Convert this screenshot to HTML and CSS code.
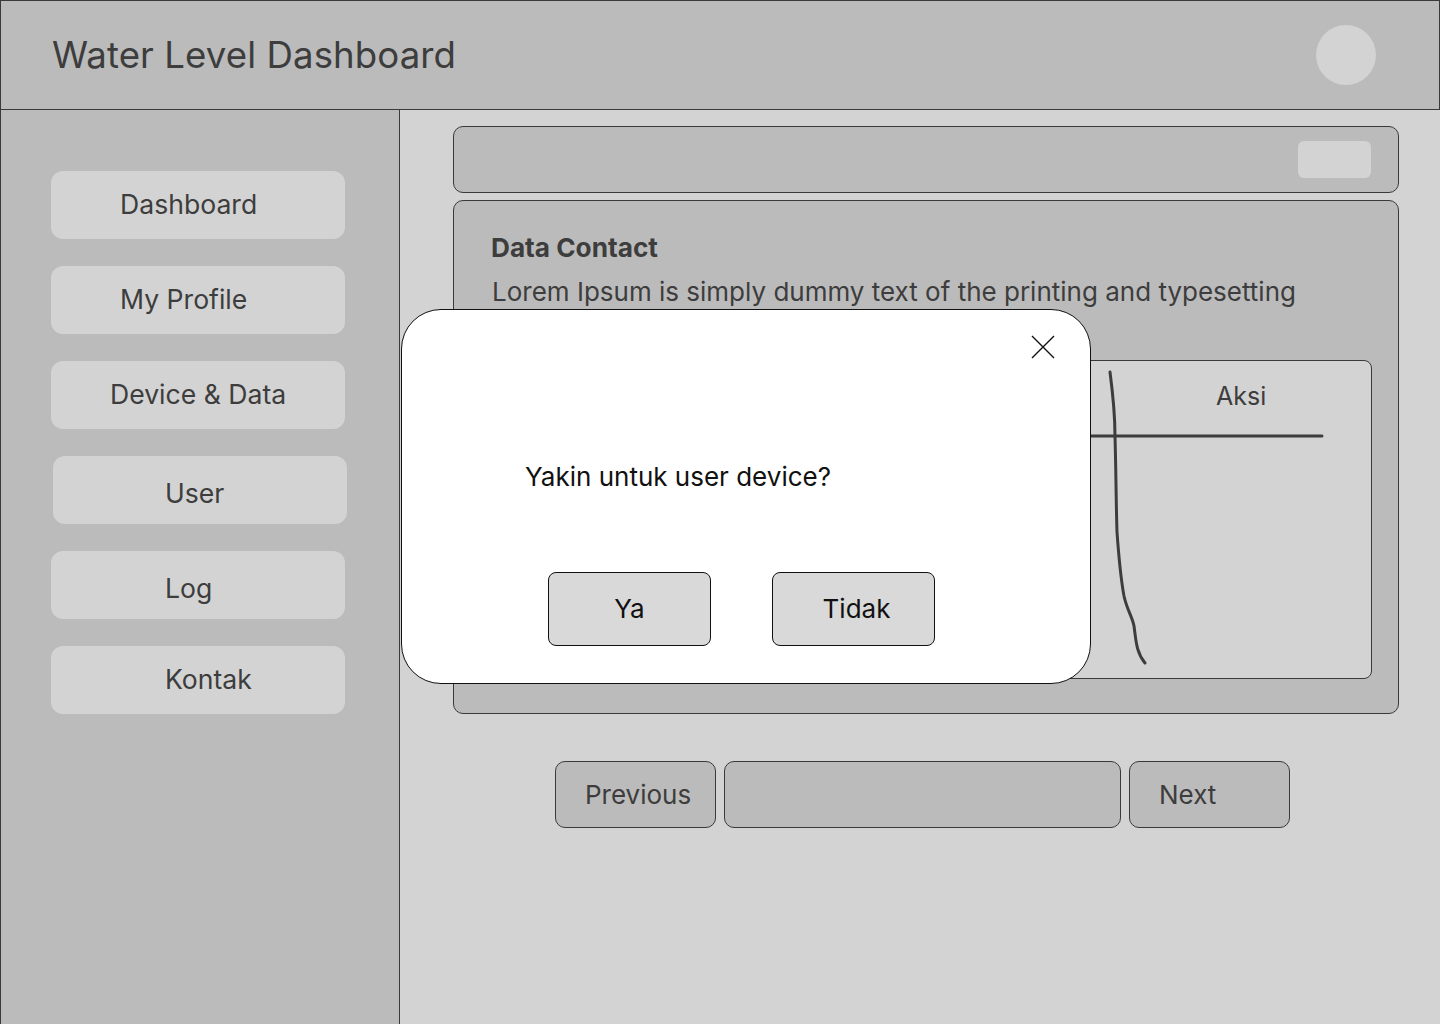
FILE: index.html
```html
<!DOCTYPE html>
<html lang="id">
<head>
<meta charset="utf-8">
<title>Water Level Dashboard</title>
<link rel="stylesheet" href="styles.css">
</head>
<body>
<header class="topbar">
  <h1 class="title">Water Level Dashboard</h1>
  <div class="avatar"></div>
</header>
<div class="layout">
  <nav class="sidebar">
    <a class="nav-btn pad-70">Dashboard</a>
    <a class="nav-btn pad-70">My Profile</a>
    <a class="nav-btn pad-60">Device &amp; Data</a>
    <a class="nav-btn pad-113 shift low">User</a>
    <a class="nav-btn pad-115 low">Log</a>
    <a class="nav-btn pad-115">Kontak</a>
  </nav>
  <main class="main">
    <div class="searchbar"><div class="search-btn"></div></div>
    <section class="card">
      <h2 class="card-title">Data Contact</h2>
      <p class="card-text">Lorem Ipsum is simply dummy text of the printing and typesetting</p>
      <div class="table">
        <div class="table-head"><span class="aksi">Aksi</span></div>
        <svg class="sketch" viewBox="0 0 881 319" width="881" height="319">
          <path d="M40 76 L831 76" stroke="#3d3d3d" stroke-width="3" fill="none" stroke-linecap="round"/>
          <path d="M619 12 C622 35 624 55 624 76 C625 110 625 140 626 172 C628 200 630 220 633 236 C636 250 641 256 643 266 C645 280 645 292 654 303" stroke="#3d3d3d" stroke-width="3" fill="none" stroke-linecap="round"/>
        </svg>
      </div>
    </section>
    <div class="pager">
      <button class="pg-btn pg-prev">Previous</button>
      <div class="pg-mid"></div>
      <button class="pg-btn pg-next">Next</button>
    </div>
  </main>
</div>
<div class="modal">
  <svg class="close" viewBox="0 0 24 24" width="24" height="24">
    <path d="M1 1 L23 23 M23 1 L1 23" stroke="#111" stroke-width="1.4" fill="none"/>
  </svg>
  <p class="modal-text">Yakin untuk user device?</p>
  <div class="modal-actions">
    <button class="m-btn">Ya</button>
    <button class="m-btn">Tidak</button>
  </div>
</div>
</body>
</html>
```
FILE: styles.css
```css
* { box-sizing: border-box; }
html, body { margin: 0; padding: 0; }
body {
  width: 1440px;
  height: 1024px;
  overflow: hidden;
  font-family: Inter, "Noto Sans", sans-serif;
  color: #3d3d3d;
  background: #d3d3d3;
  position: relative;
}
.topbar {
  height: 110px;
  background: #bbbbbb;
  border: 1px solid #3a3a3a;
  display: flex;
  align-items: center;
  justify-content: space-between;
  padding: 0 63px 0 51px;
}
.title {
  margin: 0;
  font-weight: 400;
  font-size: 36.6px;
  color: #3d3d3d;
  letter-spacing: 0.1px;
}
.avatar {
  width: 60px;
  height: 60px;
  border-radius: 50%;
  background: #d3d3d3;
}
.layout {
  display: flex;
  height: 914px;
}
.sidebar {
  width: 400px;
  flex: none;
  background: #bbbbbb;
  border-left: 1px solid #3a3a3a;
  border-right: 1px solid #3a3a3a;
  padding: 61px 0 0 50px;
  display: flex;
  flex-direction: column;
  gap: 27px;
}
.nav-btn {
  display: flex;
  align-items: center;
  width: 294px;
  height: 68px;
  border-radius: 12px;
  background: #d3d3d3;
  font-size: 26.6px;
  color: #3d3d3d;
  padding-bottom: 2px;
}
.pad-70 { padding-left: 69px; }
.pad-60 { padding-left: 59px; }
.pad-113 { padding-left: 112px; }
.pad-115 { padding-left: 114px; }
.shift { margin-left: 2px; }
.low { padding-bottom: 0; padding-top: 6px; }
.main {
  flex: 1;
  padding: 16px 41px 0 53px;
  display: flex;
  flex-direction: column;
}
.searchbar {
  height: 67px;
  background: #bbbbbb;
  border: 1px solid #3a3a3a;
  border-radius: 10px;
  display: flex;
  align-items: center;
  justify-content: flex-end;
  padding-right: 27px;
}
.search-btn {
  width: 73px;
  height: 37px;
  border-radius: 6px;
  background: #d3d3d3;
}
.card {
  margin-top: 7px;
  height: 514px;
  background: #bbbbbb;
  border: 1px solid #3a3a3a;
  border-radius: 10px;
  padding: 31px 26px 0 37px;
}
.card-title {
  margin: 0;
  font-size: 26.2px;
  font-weight: 700;
  color: #3d3d3d;
  line-height: 32px;
}
.card-text {
  margin: 11px 0 0 1px;
  font-size: 26px;
  line-height: 34px;
  color: #3d3d3d;
}
.table {
  position: relative;
  margin-top: 51px;
  height: 319px;
  background: #d3d3d3;
  border: 1px solid #3a3a3a;
  border-radius: 8px;
}
.table-head {
  display: flex;
  padding: 20px 0 0 724px;
}
.aksi {
  font-size: 25px;
  color: #3d3d3d;
}
.sketch {
  position: absolute;
  left: -1px;
  top: -1px;
}
.pager {
  margin-top: 47px;
  display: flex;
  justify-content: center;
  gap: 8px;
  padding-right: 9px;
}
.pg-btn, .pg-mid {
  height: 67px;
  background: #bbbbbb;
  border: 1px solid #3a3a3a;
  border-radius: 10px;
}
.pg-btn {
  width: 161px;
  font-family: Inter, "Noto Sans", sans-serif;
  font-size: 26px;
  color: #3d3d3d;
  text-align: left;
  padding: 0 0 0 29px;
}
.pg-prev { margin-left: 2px; }
.pg-mid { width: 397px; }
.modal {
  position: absolute;
  left: 401px;
  top: 309px;
  width: 690px;
  height: 375px;
  background: #ffffff;
  border: 1px solid #111;
  border-radius: 40px;
  padding: 0 0 0 123px;
}
.close {
  position: absolute;
  left: 629px;
  top: 25px;
}
.modal-text {
  margin: 0;
  padding-top: 150px;
  font-size: 26px;
  line-height: 34px;
  color: #111;
}
.modal-actions {
  display: flex;
  gap: 61px;
  margin-top: 78px;
  padding-left: 23px;
}
.m-btn {
  width: 163px;
  height: 74px;
  background: #d9d9d9;
  border: 1px solid #111;
  border-radius: 8px;
  font-family: Inter, "Noto Sans", sans-serif;
  font-size: 26px;
  color: #111;
  padding: 0 0 2px 0;
}
.m-btn + .m-btn { padding-left: 6px; }
```
